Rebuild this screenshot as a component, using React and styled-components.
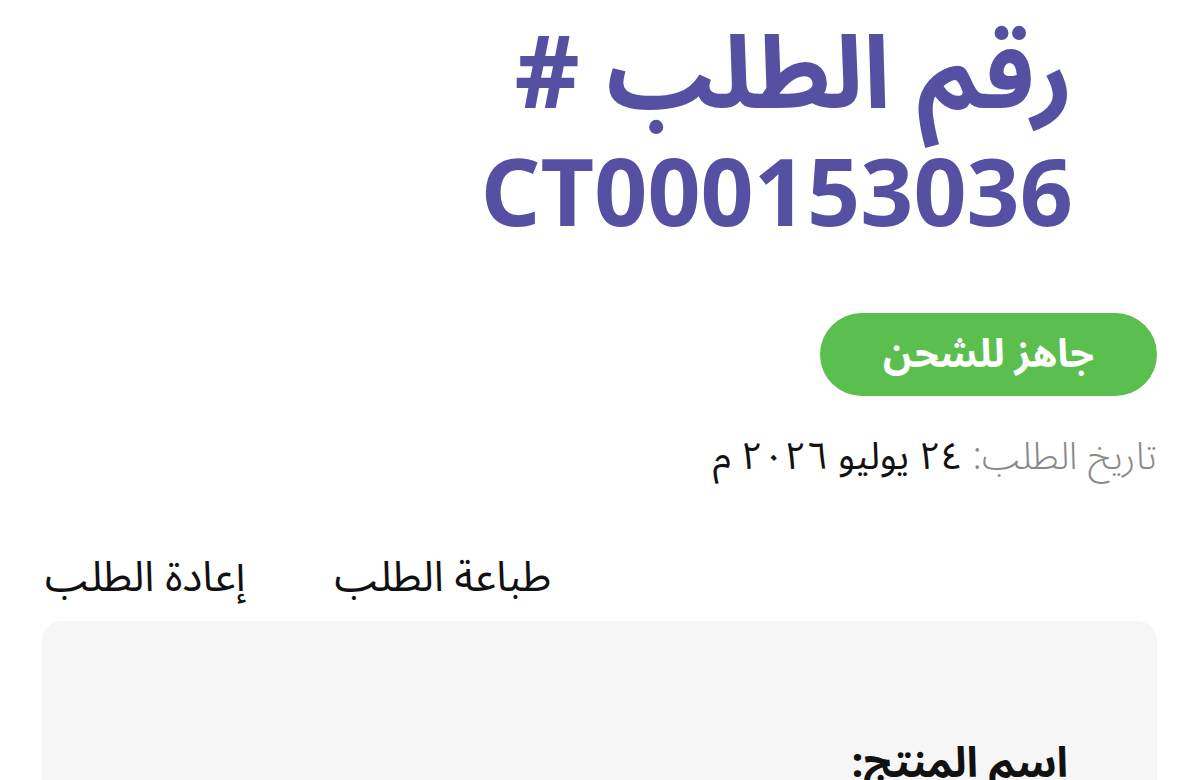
import styled, { createGlobalStyle } from "styled-components";

const GlobalStyle = createGlobalStyle`
  html, body {
    margin: 0;
    padding: 0;
    background: #ffffff;
  }
  body {
    font-family: "Noto Sans Arabic", "Noto Sans", "DejaVu Sans", sans-serif;
    color: #111111;
  }
`;

const Page = styled.div`
  direction: rtl;
  width: 1200px;
  box-sizing: border-box;
  padding: 19px 43px 0 42px;
  display: flex;
  flex-direction: column;
  align-items: stretch;
`;

const Title = styled.h1`
  margin: 0;
  padding-right: 84px;
  font-family: "Noto Sans Arabic", "Noto Sans", "DejaVu Sans", sans-serif;
  font-size: 101px;
  font-weight: 700;
  line-height: 114px;
  color: #5650a3;
  text-align: right;
`;

const OrderNumber = styled.span`
  display: block;
  direction: ltr;
  text-align: right;
  font-family: "Noto Sans", "Open Sans", sans-serif;
  font-size: 93px;
`;

const StatusRow = styled.div`
  display: flex;
  margin-top: 66px;
`;

const StatusBadge = styled.div`
  display: flex;
  align-items: center;
  justify-content: center;
  width: 337px;
  height: 83px;
  border-radius: 42px;
  background: #5bbf4f;
  color: #ffffff;
  font-size: 39px;
  font-weight: 700;
`;

const DateLine = styled.p`
  margin: 33px 0 0;
  font-size: 38px;
  line-height: 56px;
  color: #111111;
`;

const DateLabel = styled.span`
  color: #8a8a8a;
  font-weight: 300;
`;

const Actions = styled.div`
  display: flex;
  justify-content: flex-end;
  gap: 89px;
  margin-top: 63px;
  padding-left: 3px;
`;

const ActionLink = styled.a`
  font-size: 42px;
  line-height: 60px;
  color: #111111;
  text-decoration: none;
  cursor: pointer;
`;

const Card = styled.section`
  margin-top: 13px;
  background: #f6f6f6;
  border-radius: 20px;
  padding: 115px 89px 40px;
  min-height: 300px;
`;

const FieldLabel = styled.h2`
  margin: 0;
  font-size: 42px;
  font-weight: 700;
  line-height: 56px;
  color: #111111;
`;

export default function App() {
  return (
    <>
      <GlobalStyle />
      <Page>
        <Title>
          رقم الطلب #
          <OrderNumber>CT000153036</OrderNumber>
        </Title>
        <StatusRow>
          <StatusBadge>جاهز للشحن</StatusBadge>
        </StatusRow>
        <DateLine>
          <DateLabel>تاريخ الطلب: </DateLabel>٢٤ يوليو ٢٠٢٦ م
        </DateLine>
        <Actions>
          <ActionLink>طباعة الطلب</ActionLink>
          <ActionLink>إعادة الطلب</ActionLink>
        </Actions>
        <Card>
          <FieldLabel>اسم المنتج:</FieldLabel>
        </Card>
      </Page>
    </>
  );
}
